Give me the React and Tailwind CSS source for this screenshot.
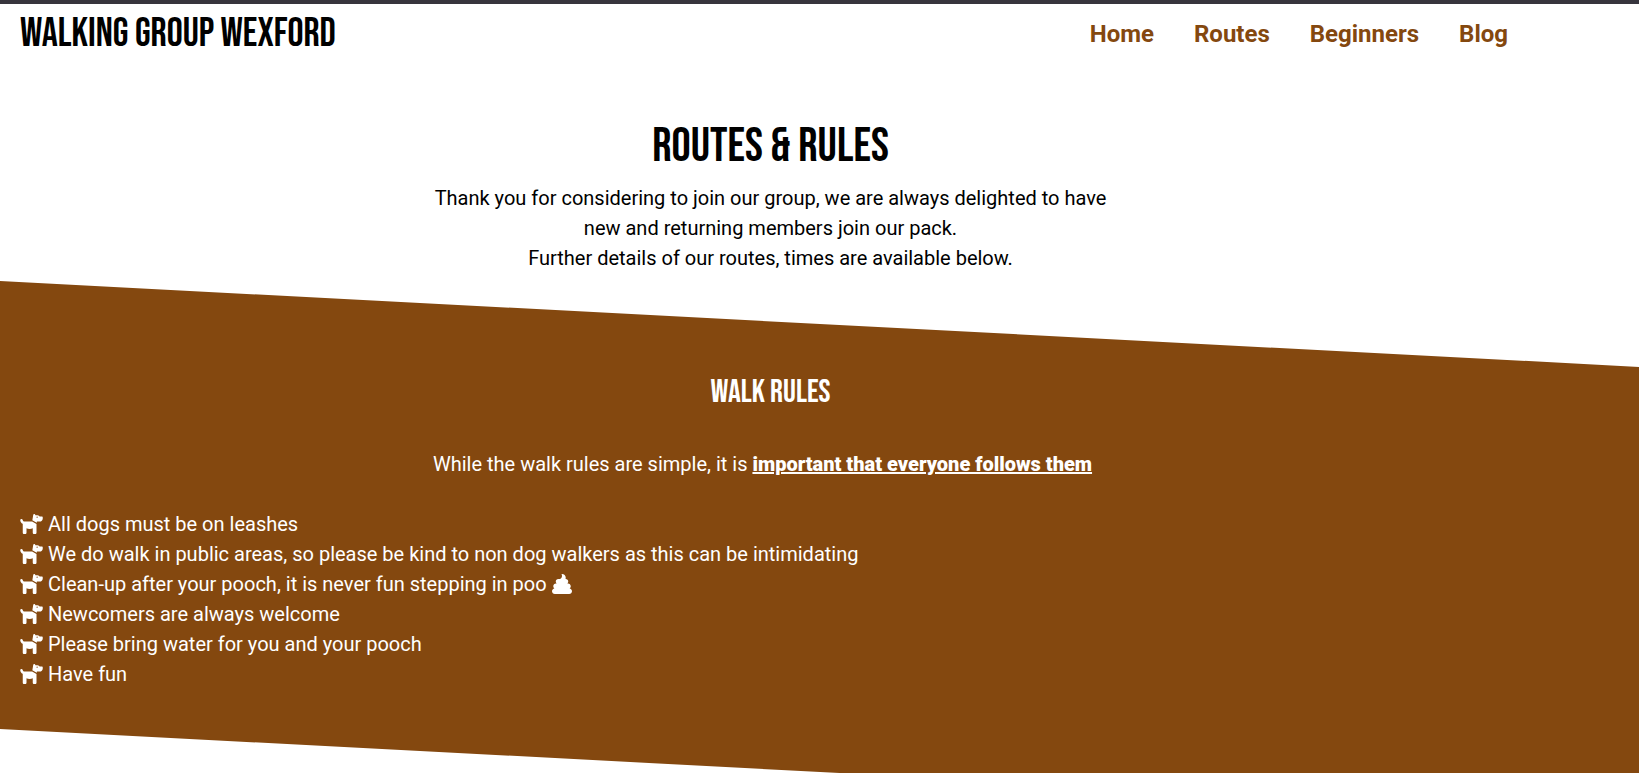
import { FaPoop } from 'react-icons/fa';

const links = ['Home', 'Routes', 'Beginners', 'Blog'];

const rules = [
  { text: 'All dogs must be on leashes' },
  { text: 'We do walk in public areas, so please be kind to non dog walkers as this can be intimidating' },
  { text: 'Clean-up after your pooch, it is never fun stepping in poo', poop: true },
  { text: 'Newcomers are always welcome' },
  { text: 'Please bring water for you and your pooch' },
  { text: 'Have fun' },
];

function DogIcon({ className }) {
  return (
    <svg viewBox="0 0 576 512" fill="currentColor" className={className} aria-hidden="true">
      <path d="M309.6 158.5L332.7 19.8C334.6 8.4 344.5 0 356.1 0c7.500 0 14.500 3.500 19 9.500L392 32h52.100c12.700 0 24.900 5.100 33.900 14.100L496 64h56c13.300 0 24 10.700 24 24v24c0 44.200-35.800 80-80 80H448h-21.300l-5.100 30.500-112-64zM416 256.100V480c0 17.700-14.300 32-32 32h-32c-17.700 0-32-14.300-32-32V364.800c-24 12.300-51.200 19.200-80 19.200s-56-6.900-80-19.200V480c0 17.700-14.300 32-32 32H96c-17.700 0-32-14.300-32-32V249.800c-28.800-10.900-51.400-35.300-59.200-66.500L1 167.800c-4.300-17.100 6.100-34.500 23.300-38.800s34.500 6.100 38.800 23.300l3.900 15.500C70.500 182 83.300 192 98 192h205.800L416 256.100zM448 80a16 16 0 1 0-32 0 16 16 0 1 0 32 0z" />
    </svg>
  );
}

export default function App() {
  return (
    <div className="min-h-screen overflow-hidden border-t-4 border-[#37353d] bg-white font-['Roboto',sans-serif] text-xl leading-[30px] text-black">
      <header className="flex max-w-[1520px] items-center justify-between px-5 pt-[10px] pr-3">
        <a
          href="#home"
          className="font-['Bebas_Neue','Liberation_Sans_Narrow','Roboto_Condensed',sans-serif] text-[40px] font-normal leading-10 uppercase"
        >
          Walking Group Wexford
        </a>
        <nav className="flex gap-10">
          {links.map((link) => (
            <a key={link} href={`#${link.toLowerCase()}`} className="text-2xl font-bold leading-10 text-[#84480f]">
              {link}
            </a>
          ))}
        </nav>
      </header>

      <main>
        <section className="max-w-[1541px] px-5 pt-[63px] pb-2 text-center">
          <h1 className="font-['Bebas_Neue','Liberation_Sans_Narrow','Roboto_Condensed',sans-serif] text-5xl font-normal leading-[60px] uppercase">
            Routes &amp; Rules
          </h1>
          <p className="mx-auto mt-[6px] max-w-[700px]">
            Thank you for considering to join our group, we are always delighted to have new and returning members
            join our pack.
            <br />
            Further details of our routes, times are available below.
          </p>
        </section>

        <section className="relative isolate pt-[92px] pb-10 text-white before:absolute before:inset-0 before:-z-10 before:origin-top-left before:skew-y-3 before:bg-[#84480f]">
          <div className="max-w-[1541px] px-5">
            <h2 className="text-center font-['Bebas_Neue','Liberation_Sans_Narrow','Roboto_Condensed',sans-serif] text-[32px] font-normal leading-10 uppercase">
              Walk Rules
            </h2>
            <p className="mt-9 pr-4 text-center">
              While the walk rules are simple, it is{' '}
              <strong className="font-black underline">important that everyone follows them</strong>
            </p>
            <ul className="mt-[30px]">
              {rules.map(({ text, poop }) => (
                <li key={text} className="flex items-center gap-[5px]">
                  <DogIcon className="h-5 w-[23px] shrink-0" />
                  <span>{text}</span>
                  {poop && <FaPoop className="size-5 shrink-0" aria-hidden="true" />}
                </li>
              ))}
            </ul>
          </div>
        </section>
      </main>
    </div>
  );
}
